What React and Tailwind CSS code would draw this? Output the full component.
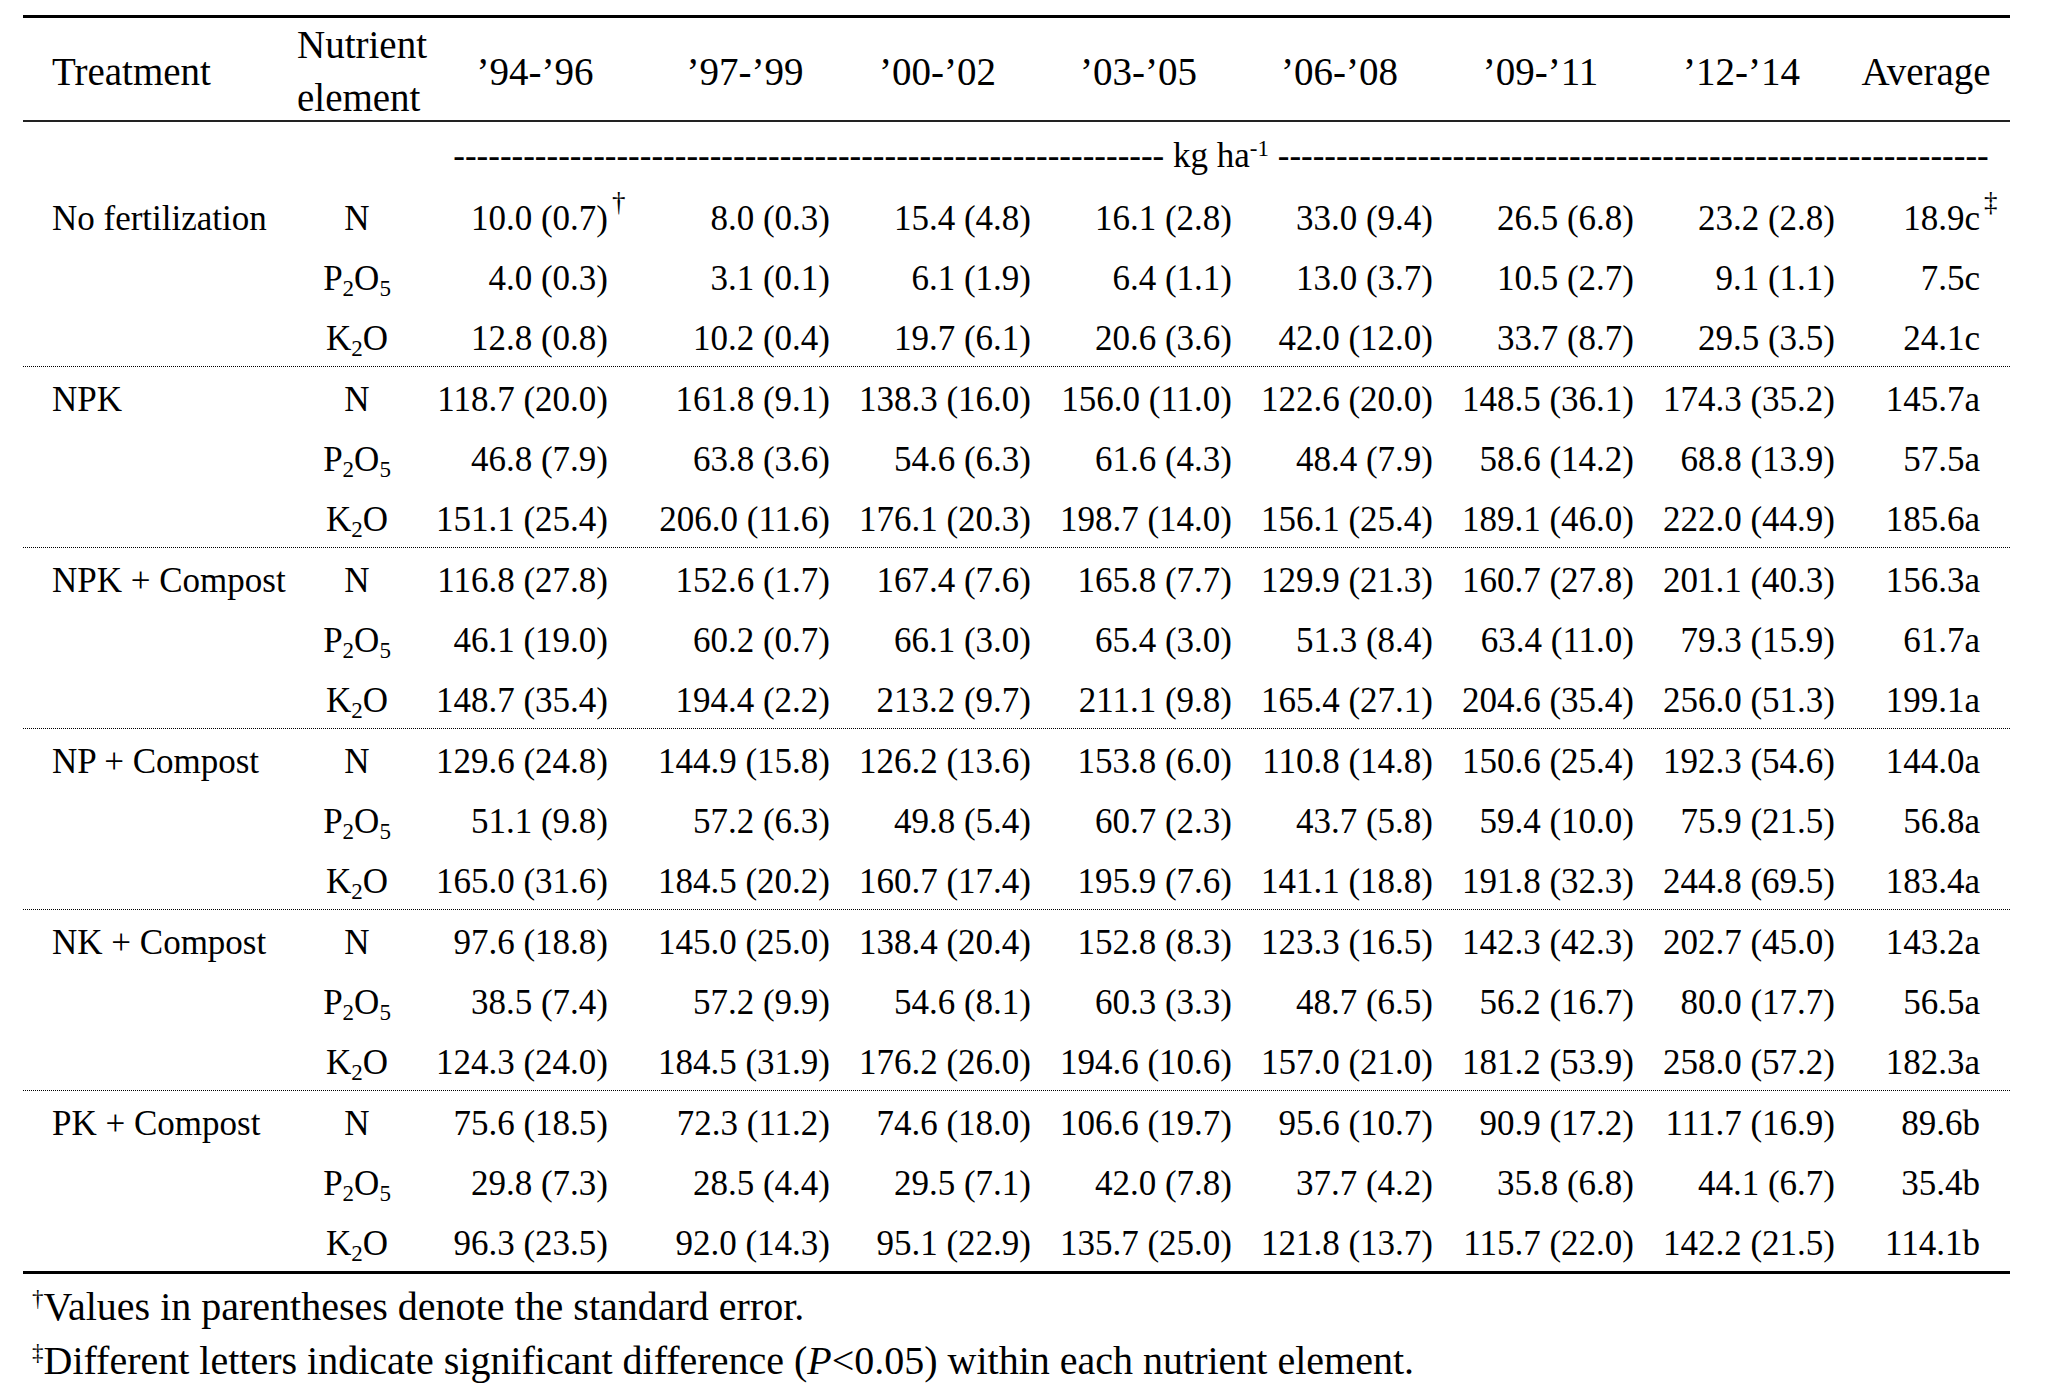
const years = ["\u201994-\u201996", "\u201997-\u201999", "\u201900-\u201902", "\u201903-\u201905", "\u201906-\u201908", "\u201909-\u201911", "\u201912-\u201914"];

const groups = [
  {
    name: "No fertilization",
    rows: [
      ["10.0 (0.7)", "8.0 (0.3)", "15.4 (4.8)", "16.1 (2.8)", "33.0 (9.4)", "26.5 (6.8)", "23.2 (2.8)", "18.9c"],
      ["4.0 (0.3)", "3.1 (0.1)", "6.1 (1.9)", "6.4 (1.1)", "13.0 (3.7)", "10.5 (2.7)", "9.1 (1.1)", "7.5c"],
      ["12.8 (0.8)", "10.2 (0.4)", "19.7 (6.1)", "20.6 (3.6)", "42.0 (12.0)", "33.7 (8.7)", "29.5 (3.5)", "24.1c"],
    ],
  },
  {
    name: "NPK",
    rows: [
      ["118.7 (20.0)", "161.8 (9.1)", "138.3 (16.0)", "156.0 (11.0)", "122.6 (20.0)", "148.5 (36.1)", "174.3 (35.2)", "145.7a"],
      ["46.8 (7.9)", "63.8 (3.6)", "54.6 (6.3)", "61.6 (4.3)", "48.4 (7.9)", "58.6 (14.2)", "68.8 (13.9)", "57.5a"],
      ["151.1 (25.4)", "206.0 (11.6)", "176.1 (20.3)", "198.7 (14.0)", "156.1 (25.4)", "189.1 (46.0)", "222.0 (44.9)", "185.6a"],
    ],
  },
  {
    name: "NPK + Compost",
    rows: [
      ["116.8 (27.8)", "152.6 (1.7)", "167.4 (7.6)", "165.8 (7.7)", "129.9 (21.3)", "160.7 (27.8)", "201.1 (40.3)", "156.3a"],
      ["46.1 (19.0)", "60.2 (0.7)", "66.1 (3.0)", "65.4 (3.0)", "51.3 (8.4)", "63.4 (11.0)", "79.3 (15.9)", "61.7a"],
      ["148.7 (35.4)", "194.4 (2.2)", "213.2 (9.7)", "211.1 (9.8)", "165.4 (27.1)", "204.6 (35.4)", "256.0 (51.3)", "199.1a"],
    ],
  },
  {
    name: "NP + Compost",
    rows: [
      ["129.6 (24.8)", "144.9 (15.8)", "126.2 (13.6)", "153.8 (6.0)", "110.8 (14.8)", "150.6 (25.4)", "192.3 (54.6)", "144.0a"],
      ["51.1 (9.8)", "57.2 (6.3)", "49.8 (5.4)", "60.7 (2.3)", "43.7 (5.8)", "59.4 (10.0)", "75.9 (21.5)", "56.8a"],
      ["165.0 (31.6)", "184.5 (20.2)", "160.7 (17.4)", "195.9 (7.6)", "141.1 (18.8)", "191.8 (32.3)", "244.8 (69.5)", "183.4a"],
    ],
  },
  {
    name: "NK + Compost",
    rows: [
      ["97.6 (18.8)", "145.0 (25.0)", "138.4 (20.4)", "152.8 (8.3)", "123.3 (16.5)", "142.3 (42.3)", "202.7 (45.0)", "143.2a"],
      ["38.5 (7.4)", "57.2 (9.9)", "54.6 (8.1)", "60.3 (3.3)", "48.7 (6.5)", "56.2 (16.7)", "80.0 (17.7)", "56.5a"],
      ["124.3 (24.0)", "184.5 (31.9)", "176.2 (26.0)", "194.6 (10.6)", "157.0 (21.0)", "181.2 (53.9)", "258.0 (57.2)", "182.3a"],
    ],
  },
  {
    name: "PK + Compost",
    rows: [
      ["75.6 (18.5)", "72.3 (11.2)", "74.6 (18.0)", "106.6 (19.7)", "95.6 (10.7)", "90.9 (17.2)", "111.7 (16.9)", "89.6b"],
      ["29.8 (7.3)", "28.5 (4.4)", "29.5 (7.1)", "42.0 (7.8)", "37.7 (4.2)", "35.8 (6.8)", "44.1 (6.7)", "35.4b"],
      ["96.3 (23.5)", "92.0 (14.3)", "95.1 (22.9)", "135.7 (25.0)", "121.8 (13.7)", "115.7 (22.0)", "142.2 (21.5)", "114.1b"],
    ],
  },
];

const cols = "grid grid-cols-[274px_120px_236px_184px_201px_201px_201px_201px_201px_168px]";
const padRight = ["pr-[45px]", "pr-[7px]", "pr-[7px]", "pr-[7px]", "pr-[7px]", "pr-[7px]", "pr-[7px]", "pr-[30px]"];

function Nutrient({ i }) {
  if (i === 0) return <span>N</span>;
  if (i === 1)
    return (
      <span>
        P<sub className="text-[23px]">2</sub>O<sub className="text-[23px]">5</sub>
      </span>
    );
  return (
    <span>
      K<sub className="text-[23px]">2</sub>O
    </span>
  );
}

function Cell({ value, mark }) {
  return (
    <span className="relative">
      {value}
      {mark && <span className="absolute left-full top-[-10px] ml-[4px] text-[27px] leading-none">{mark}</span>}
    </span>
  );
}

export default function App() {
  return (
    <div className="w-[2057px] h-[1392px] bg-white text-black font-['Liberation_Serif',serif] text-[35px]">
      <div className="ml-[23px] pt-[15px] w-[1987px]">
        <div className="border-t-[3px] border-black">
          {/* header */}
          <div className={`${cols} h-[104px] items-center text-[39px] leading-[53px] border-b-2 border-[#222]`}>
            <div className="pl-[29px]">Treatment</div>
            <div className="text-center">
              Nutrient
              <br />
              element
            </div>
            {years.map((y) => (
              <div key={y} className="text-center">
                {y}
              </div>
            ))}
            <div className="text-center">Average</div>
          </div>

          {/* unit row */}
          <div className={`${cols} h-[64px] leading-[68px]`}>
            <div className="col-start-3 col-end-11 text-center pl-[15px] whitespace-nowrap">
              {"-".repeat(61)} kg ha<sup className="text-[23px]">-1</sup> {"-".repeat(61)}
            </div>
          </div>

          {groups.map((g, gi) => (
            <div key={g.name} className={gi < groups.length - 1 ? "border-b border-dotted border-black" : ""}>
              {g.rows.map((r, ri) => (
                <div key={ri} className={`${cols} h-[60px] leading-[66px] whitespace-nowrap`}>
                  <div className="pl-[29px]">{ri === 0 ? g.name : ""}</div>
                  <div className="text-center">
                    <Nutrient i={ri} />
                  </div>
                  {r.map((v, ci) => (
                    <div key={ci} className={`text-right ${padRight[ci]}`}>
                      <Cell
                        value={v}
                        mark={gi === 0 && ri === 0 ? (ci === 0 ? "\u2020" : ci === 7 ? "\u2021" : null) : null}
                      />
                    </div>
                  ))}
                </div>
              ))}
            </div>
          ))}
        </div>

        <div className="border-t-[3px] border-black pt-[6px] pl-[9px] text-[40px] leading-[54px] whitespace-nowrap">
          <p>
            <sup className="text-[23px] top-[-14px]">{"\u2020"}</sup>Values in parentheses denote the standard error.
          </p>
          <p>
            <sup className="text-[23px] top-[-14px]">{"\u2021"}</sup>Different letters indicate significant difference (<i>P</i>
            &lt;0.05) within each nutrient element.
          </p>
        </div>
      </div>
    </div>
  );
}
